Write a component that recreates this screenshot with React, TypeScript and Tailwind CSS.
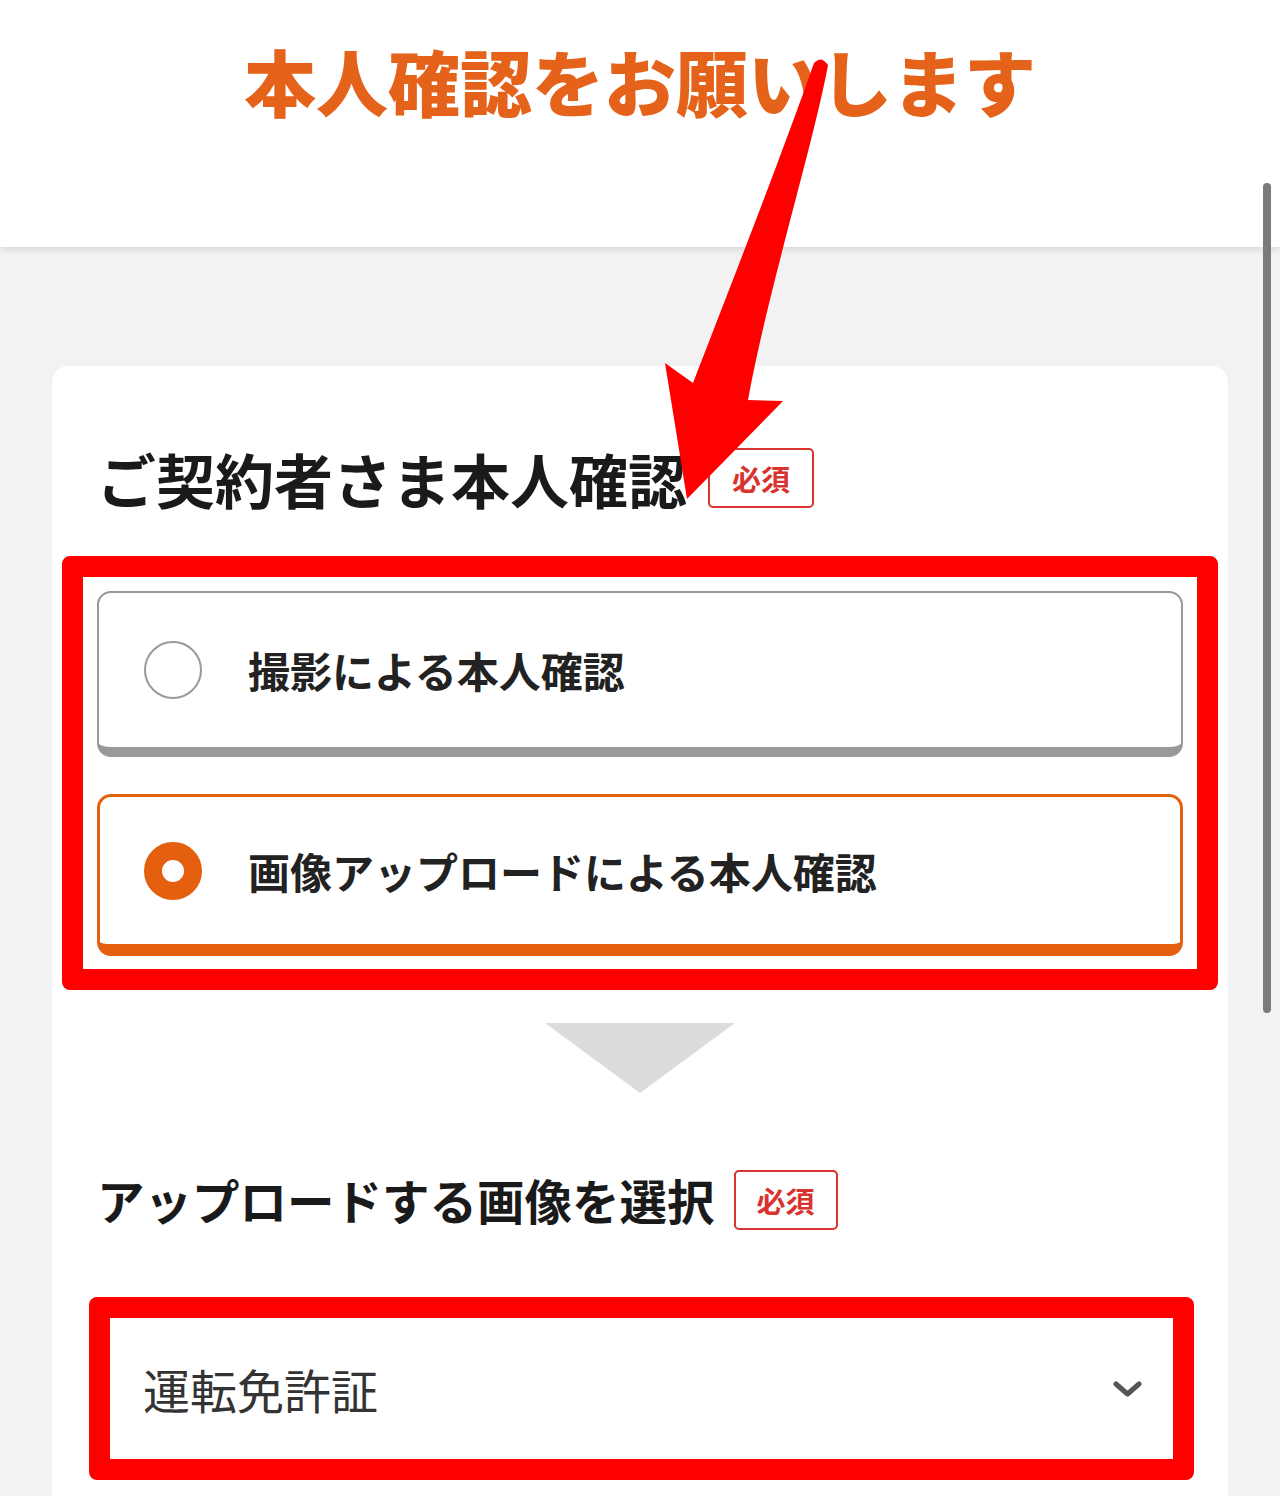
import React from 'react';

const Badge = ({ w }: { w: string }) => (
  <span
    className={`${w} h-[60px] shrink-0 flex items-center justify-center border-2 border-[#d8332e] rounded-[5px] text-[29px] font-bold leading-none text-[#d8332e]`}
  >
    必須
  </span>
);

const Option = ({ label, selected }: { label: string; selected?: boolean }) => (
  <div
    className={
      selected
        ? 'h-[162px] flex items-center pl-[44px] rounded-[14px] border-[3px] border-b-[12px] border-[#e4600f] bg-white'
        : 'h-[166px] flex items-center pl-[45px] rounded-[14px] border-2 border-b-[10px] border-[#999999] bg-white'
    }
  >
    {selected ? (
      <span className="w-[58px] h-[58px] shrink-0 rounded-full border-[18px] border-[#e4600f] bg-white" />
    ) : (
      <span className="w-[58px] h-[58px] shrink-0 rounded-full border-2 border-[#9a9a9a] bg-white" />
    )}
    <span className="ml-[46px] text-[42px] font-bold leading-none text-[#222222]">{label}</span>
  </div>
);

export default function App() {
  return (
    <div className="relative w-[1280px] h-[1496px] overflow-hidden bg-[#f2f2f2] font-['Noto_Sans_CJK_JP',sans-serif]">
      {/* header */}
      <div className="relative z-10 h-[247px] bg-white flex justify-center shadow-[0_3px_6px_rgba(0,0,0,0.1)]">
        <h1 className="pt-[44px] text-[72px] font-black leading-none text-[#e5621a]">本人確認をお願いします</h1>
      </div>

      {/* card */}
      <div className="mx-[52px] mt-[119px] bg-white rounded-t-[16px] px-[45px] pt-[82px] pb-[120px]">
        <div className="flex items-center gap-[21px] h-[60px]">
          <h2 className="text-[59px] font-bold leading-none text-[#1a1a1a]">ご契約者さま本人確認</h2>
          <Badge w="w-[106px]" />
        </div>

        <div className="mt-[48px] -mx-[35px] border-[21px] border-[#ff0000] rounded-[8px] px-[14px] pt-[14px] pb-[13px]">
          <Option label="撮影による本人確認" />
          <div className="mt-[37px]">
            <Option label="画像アップロードによる本人確認" selected />
          </div>
        </div>

        <div className="mt-[33px] mx-auto w-0 h-0 border-l-[95px] border-r-[95px] border-t-[70px] border-l-transparent border-r-transparent border-t-[#dcdcdc]" />

        <div className="mt-[77px] flex items-center gap-[19px] h-[60px]">
          <h2 className="text-[47.5px] font-bold leading-none text-[#1a1a1a]">アップロードする画像を選択</h2>
          <Badge w="w-[104px]" />
        </div>

        <div className="mt-[67px] -ml-[8px] -mr-[11px] h-[183px] border-[21px] border-[#ff0000] rounded-[8px] bg-white flex items-center justify-between pl-[33px] pr-[31px]">
          <span className="text-[47px] leading-none text-[#333333]">運転免許証</span>
          <svg width="29" height="16" viewBox="0 0 29 16" fill="none">
            <path d="M3 3 L14.5 13 L26 3" stroke="#555555" strokeWidth="5" strokeLinecap="round" strokeLinejoin="round" />
          </svg>
        </div>
      </div>

      {/* scrollbar */}
      <div className="absolute left-[1263px] top-[183px] w-[8px] h-[830px] rounded-full bg-[#7b7b7b] z-20" />

      {/* annotation arrow */}
      <svg
        className="absolute left-0 top-0 z-30 pointer-events-none"
        width="1280"
        height="1496"
        viewBox="0 0 1280 1496"
      >
        <path
          d="M814 63 Q821 55 828 65 C812 150 768 290 748 400 L783 401 L687 499 L665 363 L693 383 C725 300 780 160 814 63 Z"
          fill="#ff0000"
        />
      </svg>
    </div>
  );
}
